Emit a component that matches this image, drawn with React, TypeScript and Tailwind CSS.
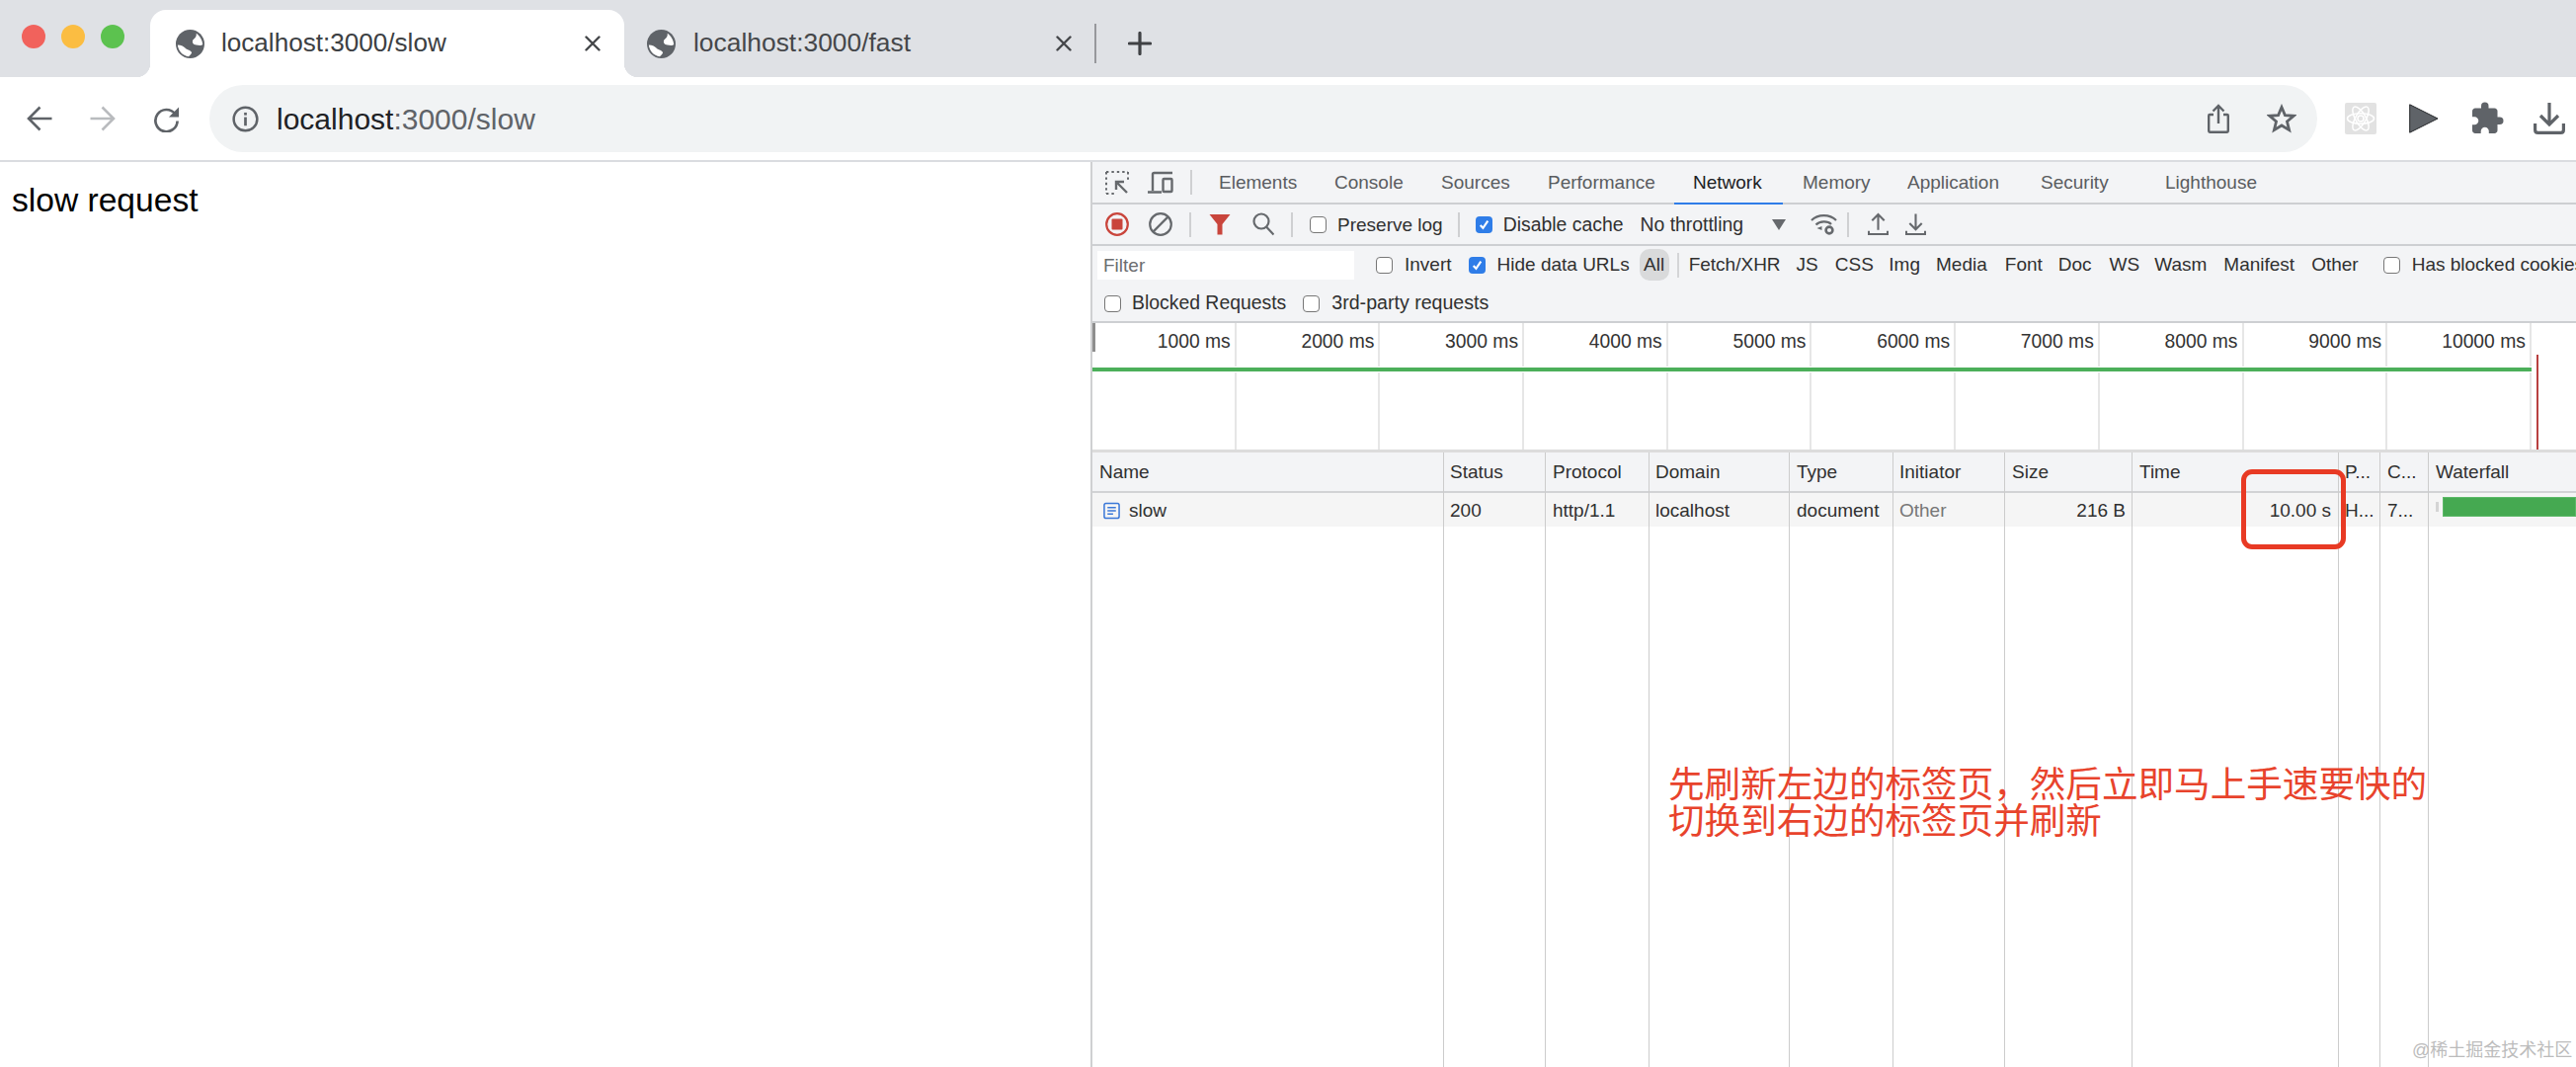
import React from "react";
import { MdExtension } from "react-icons/md";

const G = "#5f6368";

function Globe() {
  return (
    <svg viewBox="0 0 28 28" className="w-[29px] h-[29px] shrink-0">
      <circle cx="14" cy="14" r="14" fill={G} />
      <path d="M20 3.5C23.5 6 26 10 26.3 14.5C24 16.5 22 15 20 15C17 15 15.5 12.5 16.8 10C18 8.5 20.5 7.5 20 3.5Z" fill="#fff" />
      <path d="M1.8 15C5 15 8 16.5 10.5 19C12.5 20 15.5 20.5 15.5 23C14.5 24.5 13.5 25.5 12.5 26.3C6.5 25.5 2.2 20.5 1.8 15Z" fill="#fff" />
    </svg>
  );
}

function CloseX() {
  return (
    <svg viewBox="0 0 16 16" className="w-4 h-4 shrink-0" fill="none" stroke="#45474a" strokeWidth="2.4" strokeLinecap="round">
      <path d="M1.5 1.5L14.5 14.5M14.5 1.5L1.5 14.5" />
    </svg>
  );
}

function Cb({ on, className }: { on?: boolean; className: string }) {
  return on ? (
    <span className={`w-[17px] h-[17px] rounded-[4px] bg-[#2f7de8] shrink-0 flex items-center justify-center ${className}`}>
      <svg viewBox="0 0 12 12" className="w-[13px] h-[13px]" fill="none" stroke="#fff" strokeWidth="2">
        <path d="M2.5 6.5L5 9L9.5 2.5" />
      </svg>
    </span>
  ) : (
    <span className={`w-[17px] h-[17px] rounded-[4px] bg-white border border-[#777] shrink-0 ${className}`} />
  );
}

const Sep = ({ className }: { className: string }) => (
  <span className={`w-[2px] h-[25px] bg-[#cfd0d2] shrink-0 ${className}`} />
);

const types = [
  ["Fetch/XHR", "ml-[10px]"],
  ["JS", "ml-[16px]"],
  ["CSS", "ml-[17px]"],
  ["Img", "ml-[15.5px]"],
  ["Media", "ml-[16px]"],
  ["Font", "ml-[18px]"],
  ["Doc", "ml-[16px]"],
  ["WS", "ml-[18px]"],
  ["Wasm", "ml-[15px]"],
  ["Manifest", "ml-[17px]"],
  ["Other", "ml-[17px]"],
];

const ticks = ["1000 ms", "2000 ms", "3000 ms", "4000 ms", "5000 ms", "6000 ms", "7000 ms", "8000 ms", "9000 ms", "10000 ms"];

const devTabs = [
  { t: "Elements", w: "w-[117px] pl-[19px] text-[#5a5c60]" },
  { t: "Console", w: "w-[108px] pl-[19px] text-[#5a5c60]" },
  { t: "Sources", w: "w-[108px] pl-[19px] text-[#5a5c60]" },
  { t: "Performance", w: "w-[147px] pl-[19px] text-[#5a5c60]" },
  { t: "Network", w: "w-[110px] pl-[19px] text-[#202124] border-b-2 border-[#2f7de8] -mb-[2px]" },
  { t: "Memory", w: "w-[106px] pl-[20px] text-[#5a5c60]" },
  { t: "Application", w: "w-[135px] pl-[20px] text-[#5a5c60]" },
  { t: "Security", w: "w-[126px] pl-[20px] text-[#5a5c60]" },
  { t: "Lighthouse", w: "w-[130px] pl-[20px] text-[#5a5c60]" },
];

const cols = [
  { h: "Status", v: "200", w: "w-[103px]", c: "pl-[6px]" },
  { h: "Protocol", v: "http/1.1", w: "w-[105px]", c: "pl-[7px]" },
  { h: "Domain", v: "localhost", w: "w-[142px]", c: "pl-[6px]" },
  { h: "Type", v: "document", w: "w-[105px]", c: "pl-[7px]" },
  { h: "Initiator", v: "Other", w: "w-[113px]", c: "pl-[6px] text-[#777]", hc: "pl-[6px]" },
  { h: "Size", v: "216 B", w: "w-[129px]", c: "pr-[6px] justify-end", hc: "pl-[7px]" },
  { h: "Time", v: "10.00 s", w: "w-[209px]", c: "pr-[7px] justify-end", hc: "pl-[7px]" },
  { h: "P...", v: "H...", w: "w-[42px]", c: "pl-[6px]" },
  { h: "C...", v: "7...", w: "w-[49px]", c: "pl-[7px]" },
];

export default function App() {
  return (
    <div className="relative w-[2608px] h-[1080px] overflow-hidden bg-white flex flex-col font-['Liberation_Sans','Noto_Sans_CJK_SC',sans-serif]">
      {/* Tab strip */}
      <div className="h-[78px] shrink-0 bg-[#dfe1e5] flex items-end relative">
        <div className="w-[152px] h-full shrink-0 flex items-center pl-[22px] gap-[16px] pb-[4px]">
          <span className="w-6 h-6 rounded-full bg-[#f1625c] shrink-0" />
          <span className="w-6 h-6 rounded-full bg-[#fbbd42] shrink-0" />
          <span className="w-6 h-6 rounded-full bg-[#5cc24f] shrink-0" />
        </div>
        <div className="relative w-[480px] h-[68px] bg-white rounded-t-[16px] flex items-center pl-[26px] shrink-0">
          <span className="absolute left-[-14px] bottom-0 w-[14px] h-[14px] bg-[radial-gradient(circle_at_0_0,transparent_14px,white_14.5px)]" />
          <span className="absolute right-[-14px] bottom-0 w-[14px] h-[14px] bg-[radial-gradient(circle_at_100%_0,transparent_14px,white_14.5px)]" />
          <Globe />
          <span className="ml-[17px] w-[368px] text-[26.1px] text-[#3c4043] whitespace-nowrap">localhost:3000/slow</span>
          <CloseX />
        </div>
        <div className="h-[68px] flex items-center pl-[23px] shrink-0 w-[475.5px]">
          <Globe />
          <span className="ml-[18px] w-[367px] text-[26.4px] text-[#45474a] whitespace-nowrap">localhost:3000/fast</span>
          <CloseX />
        </div>
        <div className="h-[68px] flex items-center shrink-0">
          <span className="w-[2px] h-[40px] bg-[#97989c]" />
          <svg viewBox="0 0 24 24" className="w-6 h-6 ml-[32px]" fill="none" stroke="#3f4144" strokeWidth="3.2" strokeLinecap="round">
            <path d="M1.5 12H22.5M12 1.5V22.5" />
          </svg>
        </div>
      </div>

      {/* Address toolbar */}
      <div className="h-[86px] shrink-0 bg-white border-b-2 border-[#dadce0] flex items-center">
        <svg viewBox="0 0 26 26" className="w-[26px] h-[26px] ml-[27px] shrink-0" fill="none" stroke={G} strokeWidth="2.6">
          <path d="M25.5 13H2.5M13.5 1.5L2 13L13.5 24.5" />
        </svg>
        <svg viewBox="0 0 26 26" className="w-[26px] h-[26px] ml-[38px] shrink-0" fill="none" stroke="#b9bbbe" strokeWidth="2.6">
          <path d="M0.5 13H23.5M12.5 1.5L24 13L12.5 24.5" />
        </svg>
        <svg viewBox="0 0 28 28" className="w-[27px] h-[27px] ml-[38px] shrink-0">
          <path d="M23 8.5A11.5 11.5 0 1 0 25.5 16" fill="none" stroke={G} strokeWidth="2.8" />
          <path d="M27 1.5V12H16.5Z" fill={G} />
        </svg>
        <div className="ml-[30px] w-[2134px] h-[68px] rounded-full bg-[#f1f3f4] flex items-center shrink-0">
          <svg viewBox="0 0 28 28" className="w-[27px] h-[27px] ml-[23px] shrink-0">
            <circle cx="14" cy="14" r="12.3" fill="none" stroke={G} strokeWidth="2.6" />
            <rect x="12.6" y="12" width="2.8" height="9" fill={G} />
            <rect x="12.6" y="7.2" width="2.8" height="2.8" fill={G} />
          </svg>
          <span className="ml-[18px] text-[30px] whitespace-nowrap text-[#5f6368]">
            <span className="text-[#202124]">localhost</span>:3000/slow
          </span>
          <svg viewBox="0 0 22 30" className="w-[22px] h-[30px] ml-auto shrink-0" fill="none" stroke={G} strokeWidth="2.4">
            <path d="M6 11H2.2C1.5 11 1.2 11.5 1.2 12V27C1.2 28 1.7 28.8 2.7 28.8H19.3C20.3 28.8 20.8 28 20.8 27V12C20.8 11.5 20.5 11 19.8 11H16" />
            <path d="M11 20V2.5M5.5 7.5L11 2L16.5 7.5" />
          </svg>
          <svg viewBox="0 0 30 30" className="w-[30px] h-[30px] ml-[38px] mr-[21px] shrink-0" fill="none" stroke={G} strokeWidth="2.8" strokeLinejoin="miter">
            <path d="M15 3.5L18.4 11.6L27.2 12.3L20.5 18L22.6 26.6L15 22L7.4 26.6L9.5 18L2.8 12.3L11.6 11.6Z" />
          </svg>
        </div>
        <div className="ml-[28px] w-8 h-8 bg-[#e2e2e2] rounded-[2px] flex items-center justify-center shrink-0">
          <svg viewBox="0 0 32 32" className="w-8 h-8" fill="none" stroke="#fff" strokeWidth="1.5">
            <ellipse cx="16" cy="16" rx="13.5" ry="5.2" />
            <ellipse cx="16" cy="16" rx="13.5" ry="5.2" transform="rotate(60 16 16)" />
            <ellipse cx="16" cy="16" rx="13.5" ry="5.2" transform="rotate(120 16 16)" />
            <circle cx="16" cy="16" r="3" />
          </svg>
        </div>
        <svg viewBox="0 0 30 30" className="w-[30px] h-[30px] ml-[33px] shrink-0">
          <path d="M0.7 0.8L29 15L0.7 29.2Z" fill={G} stroke="#26282b" strokeWidth="1" />
        </svg>
        <MdExtension className="w-[36px] h-[36px] ml-[31px] shrink-0 text-[#5f6368]" />
        <svg viewBox="0 0 32 32" className="w-8 h-8 ml-[29px] shrink-0" fill="none" stroke={G} strokeWidth="3.2">
          <path d="M16 0V21M7 13L16 22L25 13" />
          <path d="M1.6 21V27.5C1.6 29.5 2.5 30.4 4.5 30.4H27.5C29.5 30.4 30.4 29.5 30.4 27.5V21" />
        </svg>
      </div>

      {/* Content */}
      <div className="flex-1 flex min-h-0">
        <div className="w-[1104px] shrink-0 pl-3 pt-[20px] text-[33.6px] leading-[38px] text-black">slow request</div>

        <div className="flex-1 min-w-0 border-l-2 border-[#cfd0d2] flex flex-col text-[19px] text-[#303030] overflow-hidden">
          {/* DevTools tabs */}
          <div className="h-[43px] shrink-0 bg-[#f3f4f6] border-b-2 border-[#cdcfd2] flex items-center pl-[13px] whitespace-nowrap">
            <svg viewBox="0 0 24 24" className="w-6 h-6 shrink-0" fill="none" stroke="#66696d" strokeWidth="2">
              <path d="M1 1H23M1 1V23" strokeDasharray="2.4 3" />
              <path d="M23 1V10M1 23H10" strokeDasharray="2.4 3" />
              <path d="M22 22L11 11M11 19V11H19" strokeWidth="2.4" />
            </svg>
            <svg viewBox="0 0 26 24" className="w-[26px] h-6 ml-[19px] shrink-0" fill="none" stroke="#66696d" strokeWidth="2">
              <path d="M25 2H6.5C5.5 2 5 2.5 5 3.5V20M0 21.5H14" strokeWidth="2.4" />
              <rect x="15.5" y="8" width="9" height="13" rx="1" strokeWidth="2.4" />
            </svg>
            <Sep className="ml-[17px]" />
            <div className="flex ml-[8px] h-full">
              {devTabs.map((d) => (
                <span key={d.t} className={`flex items-center shrink-0 pt-[2px] ${d.w}`}>
                  {d.t}
                </span>
              ))}
            </div>
          </div>

          {/* Network toolbar */}
          <div className="h-[42px] shrink-0 bg-[#f3f4f6] border-b-2 border-[#cdcfd2] flex items-center pl-[13px] whitespace-nowrap">
            <svg viewBox="0 0 24 24" className="w-6 h-6 shrink-0">
              <circle cx="12" cy="12" r="10.8" fill="none" stroke="#c9453c" strokeWidth="2.2" />
              <rect x="6.5" y="6.5" width="11" height="11" rx="1" fill="#c9453c" />
            </svg>
            <svg viewBox="0 0 24 24" className="w-6 h-6 ml-[20px] shrink-0" fill="none" stroke="#66696d" strokeWidth="2.2">
              <circle cx="12" cy="12" r="10.8" />
              <path d="M19.6 4.4L4.4 19.6" />
            </svg>
            <Sep className="ml-[17px]" />
            <svg viewBox="0 0 22 22" className="w-[22px] h-[22px] ml-[18px] shrink-0">
              <path d="M0.5 1H21.5L13.5 11V21.5H8.5V11Z" fill="#c9453c" />
            </svg>
            <svg viewBox="0 0 22 24" className="w-[22px] h-6 ml-[22px] shrink-0" fill="none" stroke="#66696d" strokeWidth="2.2">
              <circle cx="9" cy="9" r="7.5" />
              <path d="M14 14.5L21.5 22.5" />
            </svg>
            <Sep className="ml-[17px]" />
            <Cb className="ml-[17px]" />
            <span className="ml-[11px] pt-[2px] text-[#303030]">Preserve log</span>
            <Sep className="ml-[15px]" />
            <Cb on className="ml-[16px]" />
            <span className="ml-[11px] pt-[2px] text-[19.4px]">Disable cache</span>
            <span className="ml-[17px] pt-[2px] text-[19.4px]">No throttling</span>
            <span className="ml-[29px] w-0 h-0 border-l-[7px] border-r-[7px] border-t-[11px] border-l-transparent border-r-transparent border-t-[#66696d]" />
            <svg viewBox="0 0 27 24" className="w-[27px] h-6 ml-[25px] shrink-0" fill="none" stroke="#66696d" strokeWidth="2.2">
              <path d="M1 8C7.5 1.5 19.5 1.5 26 8" />
              <path d="M5.5 12.5C9.5 8.5 17.5 8.5 21 12" />
              <path d="M6.5 16L11.5 14V18Z" fill="#66696d" stroke="none" />
              <circle cx="19" cy="18" r="3.4" strokeWidth="2.6" />
            </svg>
            <Sep className="ml-[10px]" />
            <svg viewBox="0 0 22 24" className="w-[21px] h-6 ml-[19px] shrink-0" fill="none" stroke="#66696d" strokeWidth="2.2">
              <path d="M11 18V2M4.5 8L11 1.5L17.5 8" />
              <path d="M1 19V22.5H21V19" />
            </svg>
            <svg viewBox="0 0 22 24" className="w-[21px] h-6 ml-[17px] shrink-0" fill="none" stroke="#66696d" strokeWidth="2.2">
              <path d="M11 1V17M4.5 11L11 17.5L17.5 11" />
              <path d="M1 19V22.5H21V19" />
            </svg>
          </div>

          {/* Filter row */}
          <div className="h-[38px] shrink-0 bg-[#f3f4f6] flex items-center pl-[5px] whitespace-nowrap">
            <div className="w-[260px] h-[29px] bg-white shrink-0 pl-[6px] pt-[2px] text-[#6b6d70] flex items-center">Filter</div>
            <Cb className="ml-[22px]" />
            <span className="ml-[12px]">Invert</span>
            <Cb on className="ml-[17px]" />
            <span className="ml-[12px]">Hide data URLs</span>
            <span className="ml-[10px] w-[30px] h-[32px] rounded-[10px] bg-[#d9dadb] flex items-center justify-center shrink-0">All</span>
            <span className="ml-[8px] w-[2px] h-[25px] bg-[#d4d5d7] shrink-0" />
            {types.map(([t, c]) => (
              <span key={t} className={`pt-[1px] ${c}`}>
                {t}
              </span>
            ))}
            <Cb className="ml-[25px]" />
            <span className="ml-[12px]">Has blocked cookies</span>
          </div>

          {/* Second filter row */}
          <div className="h-[40px] shrink-0 bg-[#f3f4f6] border-b-2 border-[#cdcfd2] flex items-center pl-[12px] pt-[2px] whitespace-nowrap">
            <Cb className="" />
            <span className="ml-[11px] text-[19.4px]">Blocked Requests</span>
            <Cb className="ml-[17px]" />
            <span className="ml-[12px] text-[19.6px]">3rd-party requests</span>
          </div>

          {/* Overview timeline */}
          <div className="relative h-[131px] shrink-0 bg-white border-b-[3px] border-[#dcdcdc] flex">
            {ticks.map((t) => (
              <div key={t} className="w-[145.7px] shrink-0 border-r-2 border-[#e6e6e6] text-right pr-[4px] leading-[38px] text-[19.3px] text-[#333]">
                {t}
              </div>
            ))}
            <span className="absolute left-[-1px] top-0 w-[4px] h-[29px] bg-[#8e8e8e]" />
            <span className="absolute left-0 top-[44px] w-[1457px] h-[6px] bg-[#4caf5a] border-y border-white box-border" />
            <span className="absolute left-[1462px] top-[32px] bottom-0 w-[2px] bg-[#b84040]" />
          </div>

          {/* Network table */}
          <div className="flex-1 flex min-h-0 bg-white">
            <div className="w-[356px] shrink-0 border-r border-[#cccccc] flex flex-col">
              <div className="h-[41px] bg-[#f3f4f6] border-b-2 border-[#d2d3d5] flex items-center pl-[7px] pt-[1px]">Name</div>
              <div className="h-[34px] bg-[#f5f5f5] flex items-center pl-[11px] pt-[2px]">
                <svg viewBox="0 0 18 18" className="w-[17px] h-[18px] shrink-0" fill="none" stroke="#3b78d8" strokeWidth="1.6">
                  <rect x="1" y="1" width="16" height="16" rx="2" />
                  <path d="M4.5 5.5H13.5M4.5 9H13.5M4.5 12.5H10.5" />
                </svg>
                <span className="ml-[9px]">slow</span>
              </div>
            </div>
            {cols.map((c) => (
              <div key={c.h} className={`${c.w} shrink-0 border-r border-[#cccccc] flex flex-col whitespace-nowrap`}>
                <div className={`h-[41px] bg-[#f3f4f6] border-b-2 border-[#d2d3d5] flex items-center pt-[1px] ${c.hc ?? c.c}`}>{c.h}</div>
                <div className={`h-[34px] bg-[#f5f5f5] flex items-center pt-[2px] ${c.c}`}>{c.v}</div>
              </div>
            ))}
            <div className="flex-1 min-w-0 flex flex-col overflow-hidden">
              <div className="h-[41px] bg-[#f3f4f6] border-b-2 border-[#d2d3d5] flex items-center pl-[7px] pt-[1px]">Waterfall</div>
              <div className="h-[34px] bg-[#f5f5f5] flex items-center pl-[7px] pb-[6px]">
                <span className="w-[3px] h-[10px] bg-[#d4d4d4] shrink-0" />
                <span className="ml-[4px] flex-1 h-[20px] bg-[#45a951] border border-[#5cb968]" />
              </div>
            </div>
          </div>
        </div>
      </div>

      {/* Annotations over the screenshot */}
      <div className="absolute left-[2269px] top-[475px] w-[106px] h-[81px] border-[5px] border-[#e83a24] rounded-[11px]" />
      <div className="absolute left-[1689px] top-[776px] text-[36.6px] leading-[37px] text-[#e8432c] whitespace-nowrap">
        <div>先刷新左边的标签页，然后立即马上手速要快的</div>
        <div>切换到右边的标签页并刷新</div>
      </div>
      <div className="absolute left-[2442px] top-[1052px] text-[18px] leading-[22px] text-[#bcbcbc] whitespace-nowrap">@稀土掘金技术社区</div>
    </div>
  );
}
